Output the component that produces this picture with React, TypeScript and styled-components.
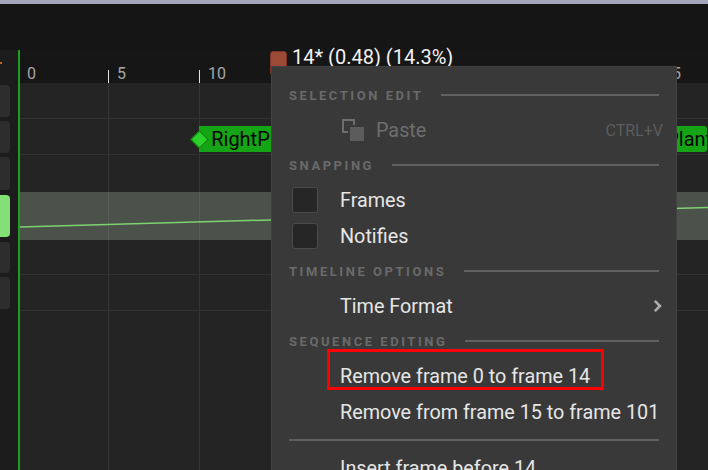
import React from "react"
import styled, { createGlobalStyle } from "styled-components"

const GlobalStyle = createGlobalStyle`
	html, body {
		margin: 0;
		padding: 0;
		background: #151515;
	}
	body {
		font-family: Roboto, "Noto Sans", sans-serif;
	}
`

// timeline geometry (page px)
const TIMELINE_X = 20
const FRAME_W = 18.2
const frameX = (f: number) => 17.2 + f * FRAME_W - TIMELINE_X

interface TrackDef {
	height: number
	line: boolean
	band?: boolean
}

const tracks: TrackDef[] = [
	{ height: 36, line: true },
	{ height: 36, line: true },
	{ height: 37, line: false },
	{ height: 48, line: false, band: true },
	{ height: 35, line: true },
	{ height: 36, line: true },
]

const Page = styled.div`
	position: relative;
	width: 708px;
	height: 470px;
	overflow: hidden;
	display: flex;
	flex-direction: column;
	background: #151515;
`

const TopStrip = styled.div`
	height: 4px;
	flex: none;
	background: #a2a6b8;
`

const TitleBar = styled.div`
	height: 46px;
	flex: none;
	background: #151515;
`

const Body = styled.div`
	flex: 1;
	display: flex;
	min-height: 0;
`

const Side = styled.div`
	width: 18px;
	flex: none;
	display: flex;
	flex-direction: column;
	background: #1c1c1c;
`

const SideHead = styled.div`
	height: 33px;
	flex: none;
	padding-top: 12px;
	box-sizing: border-box;
`

const SideMark = styled.div`
	width: 2px;
	height: 2px;
	background: #c4641e;
`

const SideCell = styled.div<{ $h: number; $pad: number }>`
	height: ${p => p.$h}px;
	flex: none;
	box-sizing: border-box;
	padding: ${p => p.$pad}px 0;
	display: flex;
`

const SideButton = styled.div<{ $active?: boolean }>`
	width: 10px;
	flex: none;
	border-radius: 0 4px 4px 0;
	background: ${p => (p.$active ? "#83e078" : "#2d2d2d")};
`

const Timeline = styled.div`
	position: relative;
	flex: 1;
	display: flex;
	flex-direction: column;
	border-left: 2px solid #1e9e1e;
	background: #242424;

	&::before {
		content: "";
		position: absolute;
		left: -2px;
		top: 0;
		border-top: 7px solid #1e9e1e;
		border-right: 9px solid transparent;
	}
`

const Ruler = styled.div`
	position: relative;
	height: 33px;
	flex: none;
	display: flex;
	background: #161616;
`

const RulerCell = styled.div<{ $w: number; $tick?: boolean; $pad: number }>`
	width: ${p => p.$w}px;
	flex: none;
	box-sizing: border-box;
	padding: 14px 0 0 ${p => p.$pad}px;
	font-size: 16px;
	line-height: 19px;
	color: #a6a6a6;
	background: ${p => (p.$tick ? "linear-gradient(#e2e2e2, #e2e2e2) no-repeat left bottom / 1px 13px" : "none")};
`

const Marker = styled.div`
	position: absolute;
	left: 250px;
	top: 1px;
	width: 17px;
	height: 26px;
	border-radius: 3px 3px 5px 5px;
	background: #9c4a36;
	border: 1px solid #7a3526;
	box-sizing: border-box;
`

const Readout = styled.div`
	position: absolute;
	left: 272px;
	top: -4px;
	font-size: 20px;
	line-height: 23px;
	color: #f2f2f2;
	white-space: nowrap;
`

const Tracks = styled.div`
	flex: 1;
	display: flex;
	flex-direction: column;
	background-image: linear-gradient(to right, #363636 1px, transparent 1px);
	background-size: 91px 100%;
	background-position: 88px 0;
`

const TrackRow = styled.div<{ $h: number; $line: boolean; $band?: boolean }>`
	position: relative;
	height: ${p => p.$h}px;
	flex: none;
	box-sizing: border-box;
	border-bottom: ${p => (p.$line ? "1px solid #313131" : "none")};
	background: ${p => (p.$band ? "rgba(140, 160, 135, 0.375)" : "transparent")};
`

const Curve = styled.svg`
	position: absolute;
	inset: 0;
	width: 100%;
	height: 100%;
`

const Note = styled.div<{ $left: number; $width: number }>`
	position: absolute;
	left: ${p => p.$left}px;
	top: 7px;
	width: ${p => p.$width}px;
	height: 26px;
	box-sizing: border-box;
	padding-left: 12px;
	border-radius: 0 3px 3px 0;
	background: #15a415;
	color: #050505;
	font-size: 20px;
	line-height: 26px;
	white-space: nowrap;
	overflow: hidden;
`

const NoteHead = styled.div<{ $left: number }>`
	position: absolute;
	left: ${p => p.$left - 6}px;
	top: 14px;
	width: 11px;
	height: 11px;
	transform: rotate(45deg);
	background: #2bd02b;
	border: 1px solid #0d7d0d;
`

const Menu = styled.div`
	position: absolute;
	left: 271px;
	top: 66px;
	width: 406px;
	height: 420px;
	box-sizing: border-box;
	padding: 11px 17px 0 17px;
	background: #393939;
	border: 1px solid #424242;
	display: flex;
	flex-direction: column;
`

const SectionHeader = styled.div`
	height: 34px;
	flex: none;
	display: flex;
	align-items: center;
	gap: 18px;
	font-size: 13px;
	font-weight: 700;
	letter-spacing: 2.55px;
	color: #6a6a6a;
	white-space: nowrap;

	&::after {
		content: "";
		flex: 1;
		height: 2px;
		background: #606060;
	}
`

const Item = styled.div<{ $disabled?: boolean }>`
	position: relative;
	height: 36px;
	flex: none;
	display: flex;
	align-items: center;
	font-size: 19.8px;
	color: ${p => (p.$disabled ? "#6e6e6e" : "#e6e6e6")};
	white-space: nowrap;
`

const Lead = styled.div<{ $w: number }>`
	width: ${p => p.$w}px;
	flex: none;
	display: flex;
	align-items: center;
`

const Checkbox = styled.div`
	width: 26px;
	height: 26px;
	margin-left: 3px;
	box-sizing: border-box;
	border: 1px solid #4a4a4a;
	border-radius: 3px;
	background: #262626;
`

const PasteIcon = styled.svg`
	margin-left: 53px;
	width: 22px;
	height: 22px;
`

const Shortcut = styled.span`
	margin-left: auto;
	margin-right: -4px;
	font-size: 16px;
	color: #5d5d5d;
`

const Chevron = styled.svg`
	margin-left: auto;
	margin-right: -3px;
	width: 9px;
	height: 14px;
`

const Separator = styled.div`
	height: 20px;
	flex: none;
	display: flex;
	align-items: center;

	&::before {
		content: "";
		flex: 1;
		height: 2px;
		background: #606060;
	}
`

const Callout = styled.div`
	position: absolute;
	left: 38px;
	top: -9px;
	width: 277px;
	height: 41px;
	box-sizing: border-box;
	border: 3px solid #ff0000;
`

const rulerCells = [0, 5, 10, 15, 20, 25, 30, 35, 40]

const App: React.FC = () => {
	return (
		<>
			<GlobalStyle />
			<Page>
				<TopStrip />
				<TitleBar />
				<Body>
					<Side>
						<SideHead>
							<SideMark />
						</SideHead>
						{tracks.map((t, i) => (
							<SideCell key={i} $h={t.height} $pad={t.band ? 3 : 2}>
								<SideButton $active={t.band} />
							</SideCell>
						))}
					</Side>
					<Timeline>
						<Ruler>
							{rulerCells.map((f, i) => (
								<RulerCell key={f} $w={i == 0 ? 88 : 91} $tick={i > 0} $pad={i == 0 ? 7 : 9}>
									{f}
								</RulerCell>
							))}
							<Marker />
							<Readout>14* (0.48) (14.3%)</Readout>
						</Ruler>
						<Tracks>
							{tracks.map((t, i) => (
								<TrackRow key={i} $h={t.height} $line={t.line} $band={t.band}>
									{i == 1 && (
										<>
											<Note $left={frameX(10)} $width={110}>
												RightPlant
											</Note>
											<NoteHead $left={frameX(10)} />
											<Note $left={frameX(35)} $width={53}>
												Plant
											</Note>
										</>
									)}
									{t.band && (
										<Curve viewBox="0 0 688 48" preserveAspectRatio="none">
											<line x1="0" y1="35" x2="688" y2="12" stroke="#7fd272" strokeWidth="1.5" />
										</Curve>
									)}
								</TrackRow>
							))}
						</Tracks>
					</Timeline>
				</Body>

				<Menu>
					<SectionHeader>SELECTION EDIT</SectionHeader>
					<Item $disabled>
						<Lead $w={87}>
							<PasteIcon viewBox="0 0 22 22">
								<rect x="1" y="1" width="11" height="12" fill="none" stroke="#6e6e6e" strokeWidth="2" />
								<rect x="6" y="6" width="16" height="16" fill="#393939" />
								<rect x="8" y="8" width="14" height="14" fill="#5c5c5c" />
							</PasteIcon>
						</Lead>
						Paste
						<Shortcut>CTRL+V</Shortcut>
					</Item>

					<SectionHeader>SNAPPING</SectionHeader>
					<Item>
						<Lead $w={51}>
							<Checkbox />
						</Lead>
						Frames
					</Item>
					<Item>
						<Lead $w={51}>
							<Checkbox />
						</Lead>
						Notifies
					</Item>

					<SectionHeader>TIMELINE OPTIONS</SectionHeader>
					<Item>
						<Lead $w={51} />
						Time Format
						<Chevron viewBox="0 0 9 14">
							<polyline points="1.8,1.8 7,7 1.8,12.2" fill="none" stroke="#adadad" strokeWidth="2.6" />
						</Chevron>
					</Item>

					<SectionHeader>SEQUENCE EDITING</SectionHeader>
					<Item>
						<Lead $w={51} />
						Remove frame 0 to frame 14
						<Callout />
					</Item>
					<Item>
						<Lead $w={51} />
						Remove from frame 15 to frame 101
					</Item>
					<Separator />
					<Item>
						<Lead $w={51} />
						Insert frame before 14
					</Item>
				</Menu>
			</Page>
		</>
	)
}

export default App
